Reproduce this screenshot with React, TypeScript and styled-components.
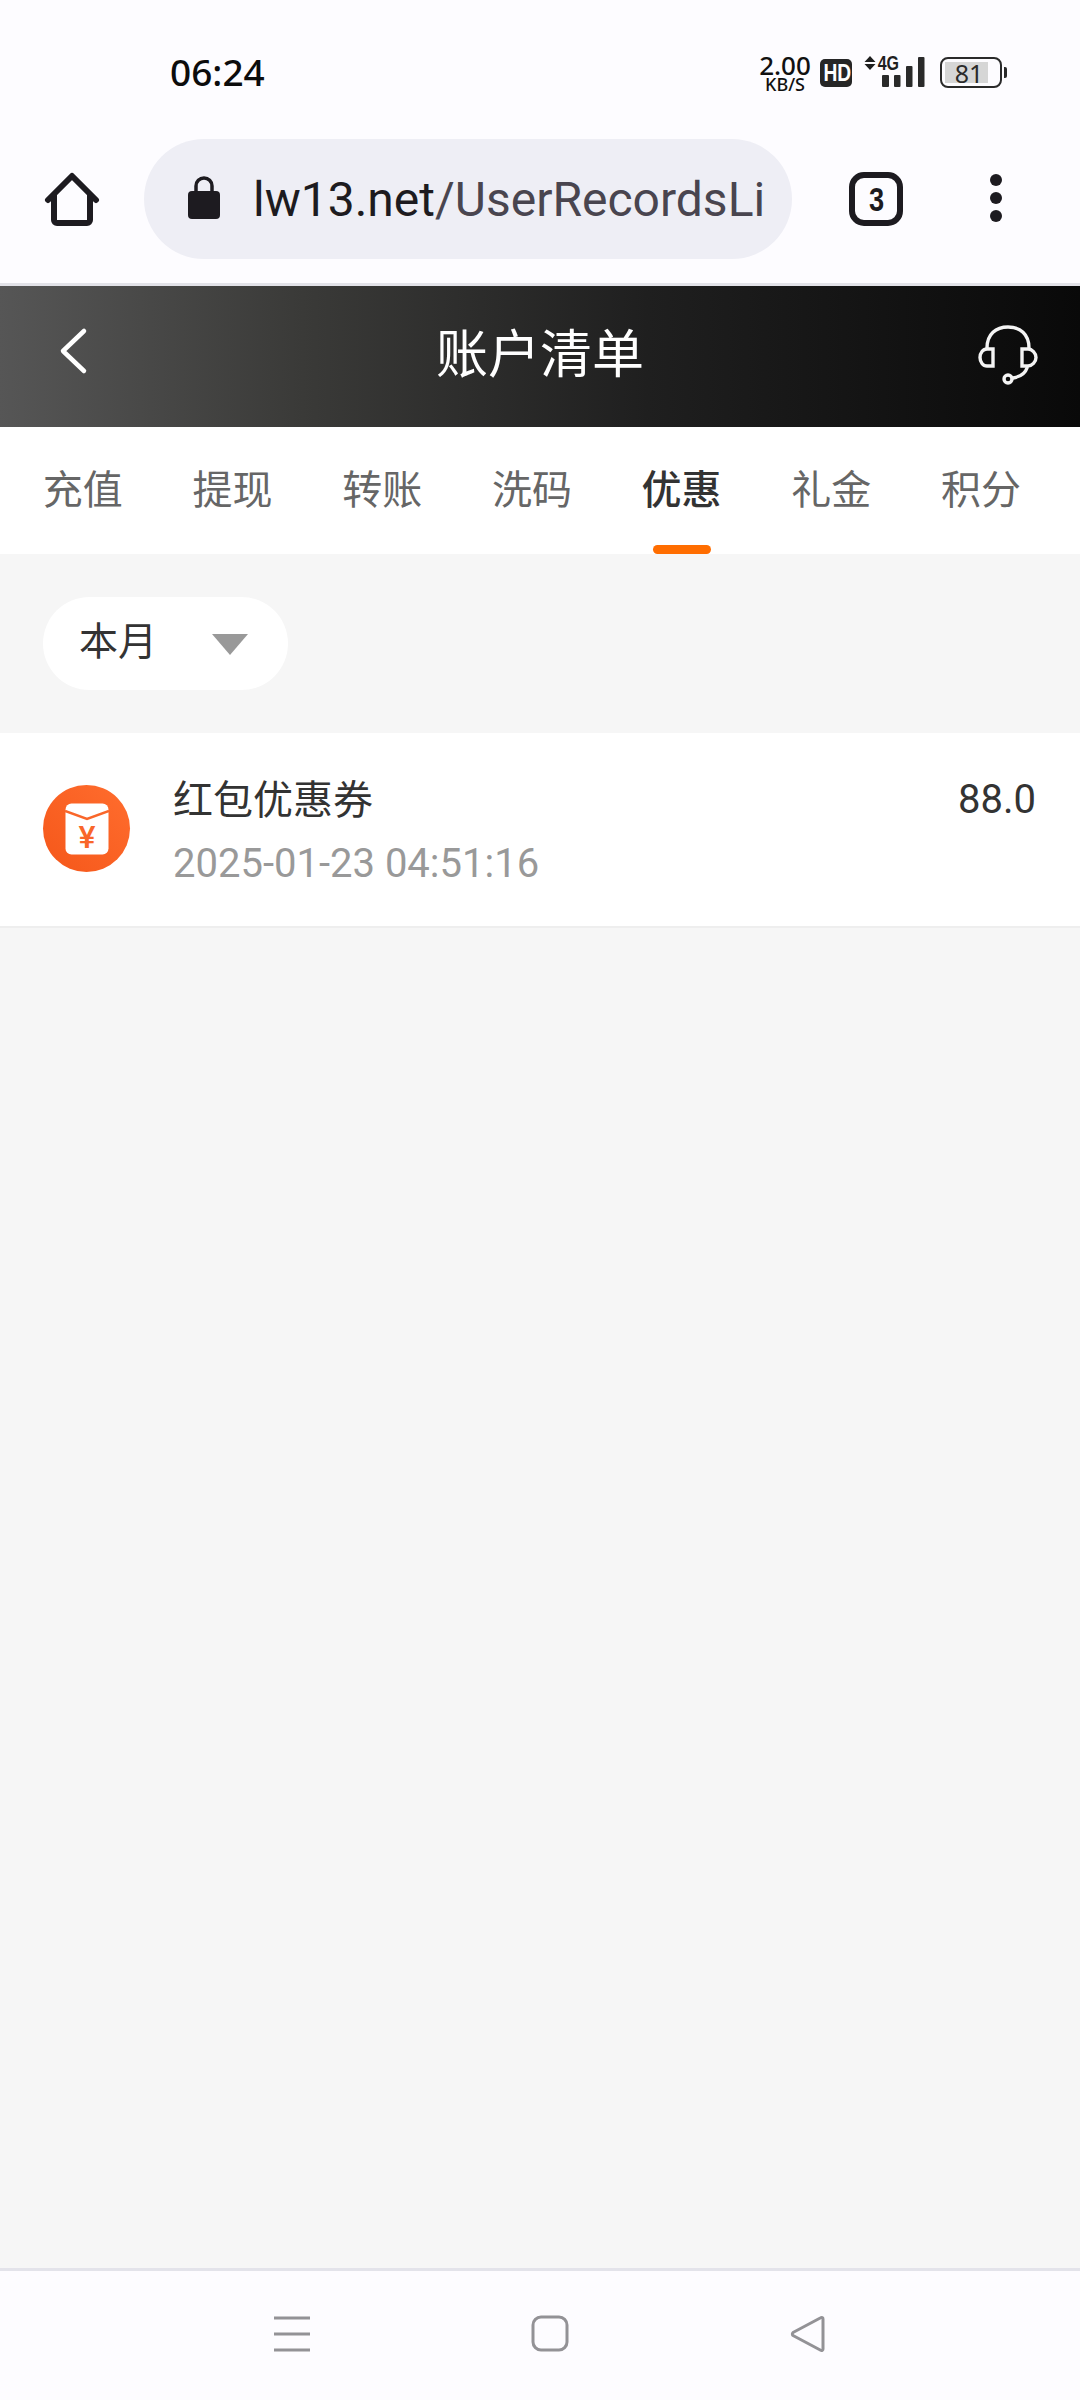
import { createGlobalStyle, styled } from "styled-components";

const CJK = `Roboto, "Noto Sans CJK SC", sans-serif`;

const tabs = ["充值", "提现", "转账", "洗码", "优惠", "礼金", "积分"];

export default function App() {
  return (
    <Page>
      <GlobalStyle />
      <StatusBar>
        <Clock>06:24</Clock>
        <StatusIcons>
          <NetSpeed>
            <SpeedValue>2.00</SpeedValue>
            <SpeedUnit>KB/S</SpeedUnit>
          </NetSpeed>
          <HdBadge>
            <Narrow>HD</Narrow>
          </HdBadge>
          <Signal>
            <NetLabel>
              <Narrow>4G</Narrow>
            </NetLabel>
            <svg width="62" height="32" viewBox="0 0 62 32">
              <path d="M6 0l5.5 6h-11zM6 14l5.5-6h-11z" fill="#1f1f1f" />
              <rect x="18" y="19" width="7" height="12" rx="1" fill="#2a2a2a" />
              <rect x="30" y="19" width="6.5" height="12" rx="1" fill="#2a2a2a" />
              <rect x="42" y="10" width="6.5" height="21" rx="1" fill="#2a2a2a" />
              <rect x="54" y="1" width="6.5" height="30" rx="1" fill="#2a2a2a" />
            </svg>
          </Signal>
          <Battery>
            <BatteryFill />
            <BatteryLevel>81</BatteryLevel>
          </Battery>
          <BatteryNub />
        </StatusIcons>
      </StatusBar>

      <BrowserBar>
        <svg width="56" height="56" viewBox="0 0 56 56">
          <path
            d="M4 29L28 5l24 24M10 24v25a3 3 0 0 0 3 3h30a3 3 0 0 0 3-3V24"
            fill="none"
            stroke="#1d1b20"
            strokeWidth="6"
            strokeLinecap="round"
            strokeLinejoin="round"
          />
        </svg>
        <UrlPill>
          <svg width="32" height="44" viewBox="0 0 32 44">
            <path d="M8 16V10a8 8 0 0 1 16 0v6" fill="none" stroke="#1d1b20" strokeWidth="3.5" />
            <rect x="0" y="15" width="32" height="28" rx="4" fill="#1d1b20" />
          </svg>
          <UrlText>
            <UrlHost>lw13.net</UrlHost>/UserRecordsList
          </UrlText>
        </UrlPill>
        <TabCount>
          <Narrow>3</Narrow>
        </TabCount>
        <MenuDots>
          <Dot />
          <Dot />
          <Dot />
        </MenuDots>
      </BrowserBar>

      <TitleBar>
        <svg width="30" height="48" viewBox="0 0 30 48">
          <path
            d="M26 4L5 24l21 20"
            fill="none"
            stroke="#fff"
            strokeWidth="4.500"
            strokeLinecap="round"
            strokeLinejoin="round"
          />
        </svg>
        <Title>账户清单</Title>
        <svg width="60" height="60" viewBox="0 0 60 60">
          <g fill="none" stroke="#f4f4f4" strokeWidth="3.400" strokeLinecap="round">
            <path d="M9 23C9 9 18 2 30 2s21 7 21 21" />
            <path d="M15 24H9c-4 0-7 4-7 8.500s3 8.500 7 8.500h6z" />
            <path d="M44 24h6c4 0 8 4 8 8.500s-4 8.500-8 8.500h-6z" />
            <path d="M49 43c-2 6-8 9-14 10" />
            <circle cx="30" cy="54" r="4" />
          </g>
        </svg>
      </TitleBar>

      <TabRow>
        {tabs.map((tab) => (
          <Tab key={tab} $active={tab === "优惠"}>
            {tab}
          </Tab>
        ))}
      </TabRow>

      <FilterArea>
        <MonthSelect>
          <MonthLabel>本月</MonthLabel>
          <Caret />
        </MonthSelect>
      </FilterArea>

      <RecordRow>
        <RecordIcon>
          <svg width="44" height="52" viewBox="0 0 44 52">
            <rect x="0.500" y="0.500" width="43" height="51" rx="6" fill="#fff" />
            <path d="M0 8l22 8 22-8" fill="none" stroke="#f9662a" strokeWidth="2.500" />
            <text x="22" y="45" textAnchor="middle" fontSize="32" fontWeight="500" fontFamily="Roboto, sans-serif" fill="#f9662a">
              ¥
            </text>
          </svg>
        </RecordIcon>
        <RecordText>
          <RecordTitle>红包优惠券</RecordTitle>
          <RecordDate>2025-01-23 04:51:16</RecordDate>
        </RecordText>
        <RecordAmount>88.0</RecordAmount>
      </RecordRow>

      <EmptyArea />

      <NavBar>
        <svg width="36" height="36" viewBox="0 0 36 36">
          <path d="M0 2h36M0 18h36M0 34h36" stroke="#939296" strokeWidth="3" />
        </svg>
        <svg width="38" height="37" viewBox="0 0 38 37">
          <rect x="2" y="2" width="34" height="33" rx="8" fill="none" stroke="#939296" strokeWidth="3" />
        </svg>
        <svg width="36" height="38" viewBox="0 0 36 38">
          <path
            d="M33 4v30a1.500 1.500 0 0 1-2.300 1.300L3 20.500a2 2 0 0 1 0-3L30.700 2.700A1.500 1.500 0 0 1 33 4z"
            fill="none"
            stroke="#939296"
            strokeWidth="3"
            strokeLinejoin="round"
          />
        </svg>
      </NavBar>
    </Page>
  );
}

const GlobalStyle = createGlobalStyle`
  html, body {
    margin: 0;
    padding: 0;
    background: #f6f6f6;
  }
  * {
    box-sizing: border-box;
  }
`;

const Page = styled.div`
  width: 1080px;
  height: 2400px;
  display: flex;
  flex-direction: column;
  overflow: hidden;
  background: #f6f6f6;
  font-family: ${CJK};
`;

const Narrow = styled.span`
  display: inline-block;
  transform: scaleX(0.8);
`;

const StatusBar = styled.div`
  height: 139px;
  flex: none;
  background: #fdfcff;
  display: flex;
  justify-content: space-between;
  padding: 52px 73px 0 170px;
`;

const Clock = styled.div`
  font-family: "Noto Sans", sans-serif;
  font-size: 37px;
  line-height: 40px;
  font-weight: 500;
  color: #0c0c0c;
`;

const StatusIcons = styled.div`
  display: flex;
  align-items: flex-start;
  height: 36px;
  margin-top: 4px;
`;

const NetSpeed = styled.div`
  width: 52px;
  margin-top: -1px;
  display: flex;
  flex-direction: column;
  align-items: center;
  color: #111;
  font-family: "Noto Sans", sans-serif;
  font-weight: 500;
`;

const SpeedValue = styled.span`
  font-size: 26px;
  line-height: 20px;
`;

const SpeedUnit = styled.span`
  font-size: 18px;
  line-height: 14px;
  margin-top: 2px;
`;

const HdBadge = styled.div`
  width: 32px;
  height: 28px;
  margin: 3px 0 0 9px;
  background: #262626;
  border-radius: 5px;
  color: #fff;
  font-family: "Liberation Sans", sans-serif;
  font-size: 24px;
  font-weight: 700;
  line-height: 28px;
  text-align: center;
  white-space: nowrap;
`;

const Signal = styled.div`
  position: relative;
  margin-left: 12px;
  height: 32px;
`;

const NetLabel = styled.span`
  position: absolute;
  left: 11px;
  top: -2px;
  font-family: "Liberation Sans", sans-serif;
  font-size: 20px;
  line-height: 18px;
  font-weight: 700;
  color: #1f1f1f;
  white-space: nowrap;
`;

const Battery = styled.div`
  position: relative;
  width: 62px;
  height: 31px;
  margin: 1px 0 0 14px;
  border: 2.5px solid #2a2a2a;
  border-radius: 8px;
  display: flex;
  align-items: center;
  justify-content: center;
`;

const BatteryFill = styled.div`
  position: absolute;
  left: 3px;
  top: 3px;
  bottom: 3px;
  width: 43px;
  background: #d6d6d6;
`;

const BatteryLevel = styled.span`
  position: relative;
  font-family: "Noto Sans", sans-serif;
  font-size: 25px;
  line-height: 26px;
  color: #2a2a2a;
  margin-right: 4px;
`;

const BatteryNub = styled.div`
  width: 3px;
  height: 11px;
  margin: 11px 0 0 2px;
  background: #2a2a2a;
  border-radius: 0 2px 2px 0;
`;

const BrowserBar = styled.div`
  height: 147px;
  flex: none;
  background: #fdfcff;
  border-bottom: 3px solid #e2e2e8;
  display: flex;
  align-items: flex-start;
  padding: 0 0 0 44px;

  & > svg {
    margin-top: 32px;
  }
`;

const UrlPill = styled.div`
  width: 648px;
  height: 120px;
  margin-left: 44px;
  padding: 0 25px 0 44px;
  border-radius: 60px;
  background: #eeeef5;
  display: flex;
  align-items: center;
  gap: 33px;
  overflow: hidden;

  & > svg {
    flex: none;
    margin-top: -2px;
  }
`;

const UrlText = styled.div`
  flex: 1;
  min-width: 0;
  margin-top: 2px;
  overflow: hidden;
  white-space: nowrap;
  font-family: Roboto, sans-serif;
  font-size: 48px;
  line-height: 60px;
  color: #49454f;
`;

const UrlHost = styled.span`
  color: #1d1b20;
`;

const TabCount = styled.div`
  width: 54px;
  height: 54px;
  margin: 33px 0 0 57px;
  border: 6px solid #1d1b20;
  border-radius: 15px;
  display: flex;
  align-items: center;
  justify-content: center;
  font-family: "Liberation Sans", sans-serif;
  font-size: 34px;
  font-weight: 700;
  color: #1d1b20;
`;

const MenuDots = styled.div`
  margin: 35px 0 0 87px;
  display: flex;
  flex-direction: column;
  gap: 6px;
`;

const Dot = styled.div`
  width: 12px;
  height: 12px;
  border-radius: 50%;
  background: #1d1b20;
`;

const TitleBar = styled.div`
  height: 141px;
  flex: none;
  display: flex;
  align-items: center;
  justify-content: space-between;
  padding: 0 42px 0 58px;
  background: linear-gradient(90deg, #565656 0%, #3a3a38 28%, #1f1f1f 60%, #090909 100%);

  & > svg:first-child {
    margin-top: -12px;
  }
  & > svg:last-child {
    margin-top: -4px;
  }
`;

const Title = styled.div`
  font-size: 52px;
  line-height: 60px;
  color: #fff;
  margin: -1px 0 0 14px;
`;

const TabRow = styled.div`
  height: 127px;
  flex: none;
  background: #fff;
  display: flex;
  padding-left: 8px;
`;

const Tab = styled.div<{ $active?: boolean }>`
  position: relative;
  width: 149.7px;
  padding-top: 39px;
  text-align: center;
  font-size: 40px;
  line-height: 50px;
  font-weight: ${(p) => (p.$active ? 500 : 400)};
  color: ${(p) => (p.$active ? "#333" : "#666")};

  &::after {
    content: "";
    display: ${(p) => (p.$active ? "block" : "none")};
    position: absolute;
    left: 46px;
    bottom: 0;
    width: 58px;
    height: 9px;
    border-radius: 5px;
    background: #ff6d00;
  }
`;

const FilterArea = styled.div`
  height: 179px;
  flex: none;
  padding: 43px 0 0 43px;
`;

const MonthSelect = styled.div`
  width: 245px;
  height: 93px;
  padding: 0 40px 0 36px;
  border-radius: 47px;
  background: #fff;
  display: flex;
  align-items: center;
  justify-content: space-between;
`;

const MonthLabel = styled.span`
  font-size: 39px;
  line-height: 50px;
  margin-top: -4px;
  color: #333;
`;

const Caret = styled.div`
  width: 0;
  height: 0;
  margin-top: 2px;
  border-left: 18px solid transparent;
  border-right: 18px solid transparent;
  border-top: 21px solid #999;
`;

const RecordRow = styled.div`
  height: 195px;
  flex: none;
  background: #fff;
  border-bottom: 2px solid #eeeeee;
  display: flex;
  align-items: flex-start;
  padding: 0 44px 0 43px;
`;

const RecordIcon = styled.div`
  width: 87px;
  height: 87px;
  margin-top: 52px;
  border-radius: 50%;
  background: linear-gradient(45deg, #f5571a, #ff6d2e);
  display: flex;
  align-items: center;
  justify-content: center;
  flex: none;
`;

const RecordText = styled.div`
  flex: 1;
  margin-left: 43px;
  padding-top: 40px;
`;

const RecordTitle = styled.div`
  font-size: 40px;
  line-height: 56px;
  color: #333;
`;

const RecordDate = styled.div`
  font-size: 40px;
  line-height: 48px;
  margin-top: 11px;
  color: #999;
`;

const RecordAmount = styled.div`
  margin-top: 42px;
  font-size: 40px;
  line-height: 50px;
  color: #333;
`;

const EmptyArea = styled.div`
  flex: 1;
  background: #f6f6f6;
`;

const NavBar = styled.div`
  height: 132px;
  flex: none;
  background: #fdfcff;
  border-top: 3px solid #e3e3ea;
  display: flex;
  align-items: center;
  padding: 0 0 4px 274px;
  gap: 221px;
`;
